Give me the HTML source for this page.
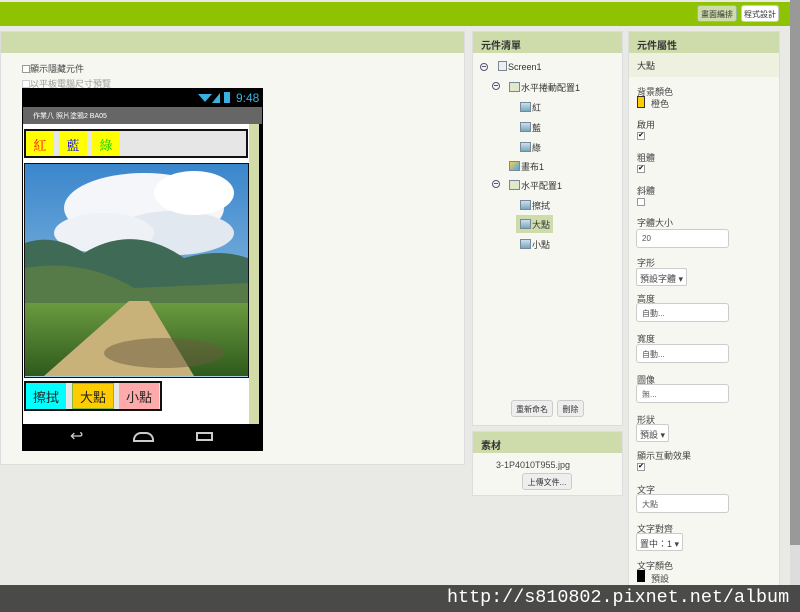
<!DOCTYPE html>
<html><head><meta charset="utf-8"><style>
*{margin:0;padding:0;box-sizing:border-box}
body{width:800px;height:612px;overflow:hidden;background:#e9e9e6;font-family:"Liberation Sans","Noto Sans CJK TC",sans-serif;font-size:9px;color:#333;position:relative}
.a{position:absolute}
.hd{background:#cddcaa;height:21px;font-size:10px;font-weight:bold;color:#333;padding:5px 8px}
.pn{background:#f7f7f2;border:1px solid #ddd}
.lbl{position:absolute;left:637px;font-size:9px;color:#444;white-space:nowrap}
.inp{position:absolute;left:636px;width:93px;height:19px;background:#fff;border:1px solid #ccc;border-radius:3px;font-size:8px;padding:4px 5px;color:#555}
.sel{position:absolute;left:636px;height:18px;background:#fff;border:1px solid #ccc;border-radius:2px;font-size:9px;padding:3px 3px;color:#444;white-space:nowrap}
.cb{position:absolute;left:637px;width:8px;height:8px;border:1px solid #999;background:#fff;font-size:7px;line-height:6px;text-align:center;color:#000}
.btn{position:absolute;background:#eee;border:1px solid #ccc;border-radius:3px;font-size:8px;text-align:center;padding-top:3px;color:#333;white-space:nowrap}
.tr{position:absolute;font-size:9px;color:#333;white-space:nowrap}
.ic{display:inline-block;width:11px;height:10px;background:linear-gradient(#cde,#7ab);border:1px solid #789;vertical-align:-1px;margin-right:1px}
.mi{position:absolute;width:8px;height:8px;border:1px solid #557;border-radius:50%}
.mi:after{content:"";position:absolute;left:1px;top:2px;width:4px;height:1px;background:#557}
</style></head><body>
<div class="a" style="left:0;top:2px;width:790px;height:24px;background:#8fc200"></div>
<div class="btn" style="left:697px;top:5px;width:40px;height:17px;background:#cddcaa;border-color:#9b9">畫面編排</div>
<div class="btn" style="left:741px;top:5px;width:38px;height:17px;background:#fff">程式設計</div>

<div class="a pn" style="left:0;top:31px;width:465px;height:434px">
<div class="hd" style="height:21px"></div></div>
<div class="a" style="left:22px;top:62px;font-size:9px;color:#444"><span class="cb" style="position:relative;left:0;display:inline-block;vertical-align:-1px"></span>顯示隱藏元件</div>
<div class="a" style="left:22px;top:77px;font-size:9px;color:#999"><span class="cb" style="position:relative;left:0;display:inline-block;vertical-align:-1px;border-color:#ccc"></span>以平板電腦尺寸預覽</div>
<div class="a" style="left:22px;top:88px;width:241px;height:363px;background:#000"></div>
<div class="a" style="left:236px;top:91px;color:#3ab0e0;font-size:12px">9:48</div>
<div class="a" style="left:198px;top:92px;width:14px;height:10px;background:#3ab0e0;clip-path:polygon(50% 100%,0 20%,100% 20%)"></div>
<div class="a" style="left:212px;top:93px;width:8px;height:10px;background:#3ab0e0;clip-path:polygon(100% 0,100% 100%,0 100%)"></div>
<div class="a" style="left:224px;top:92px;width:6px;height:11px;background:#3ab0e0"></div>
<div class="a" style="left:23px;top:107px;width:239px;height:17px;background:#666;color:#fff;font-size:7px;padding:4px 10px">作業八 照片塗鴉2 BA05</div>
<div class="a" style="left:23px;top:124px;width:226px;height:300px;background:#fff"></div>
<div class="a" style="left:249px;top:124px;width:10px;height:300px;background:#d2dca8"></div>
<div class="a" style="left:24px;top:129px;width:224px;height:29px;border:2px solid #111;background:#e6e6e6"></div>
<div class="a" style="left:26px;top:131px;width:28px;height:25px;background:#ff0;color:#f00;font-size:13px;text-align:center;padding-top:4px;font-family:'Noto Serif CJK SC',serif">紅</div>
<div class="a" style="left:59px;top:131px;width:28px;height:25px;background:#ff0;color:#00f;font-size:13px;text-align:center;padding-top:4px;font-family:'Noto Serif CJK SC',serif">藍</div>
<div class="a" style="left:92px;top:131px;width:28px;height:25px;background:#ff0;color:#0c0;font-size:13px;text-align:center;padding-top:4px;font-family:'Noto Serif CJK SC',serif">綠</div>
<svg class="a" style="left:24px;top:163px" width="225" height="215" viewBox="0 0 225 215">
<rect width="225" height="215" fill="#111"/>
<defs><linearGradient id="s" x1="0" y1="0" x2="0" y2="1"><stop offset="0" stop-color="#3a86cc"/><stop offset="1" stop-color="#a8cfe8"/></linearGradient>
<linearGradient id="f" x1="0" y1="0" x2="0" y2="1"><stop offset="0" stop-color="#6a9a40"/><stop offset="1" stop-color="#2f5a1c"/></linearGradient></defs>
<rect x="1" y="1" width="223" height="213" fill="url(#s)"/>
<ellipse cx="120" cy="45" rx="80" ry="35" fill="#f4f6fa"/>
<ellipse cx="150" cy="70" rx="60" ry="22" fill="#e2e8f0"/>
<ellipse cx="80" cy="70" rx="50" ry="20" fill="#eef2f6"/>
<ellipse cx="170" cy="30" rx="40" ry="22" fill="#fff"/>
<path d="M1 80 Q30 70 60 90 Q110 60 160 95 Q195 85 224 95 L224 140 L1 140Z" fill="#3f6a55"/>
<path d="M1 105 Q60 95 110 125 L224 120 L224 145 L1 145Z" fill="#567a48"/>
<rect x="1" y="140" width="223" height="73" fill="url(#f)"/>
<path d="M105 138 L125 138 L170 213 L20 213Z" fill="#c9b27a"/>
<ellipse cx="140" cy="190" rx="60" ry="15" fill="#6a5a40" opacity=".5"/>
</svg>
<div class="a" style="left:24px;top:381px;width:138px;height:30px;border:2px solid #111;background:#e6e6e6"></div>
<div class="a" style="left:26px;top:383px;width:40px;height:26px;background:#0ff;font-size:13px;text-align:center;padding-top:4px;color:#222">擦拭</div>
<div class="a" style="left:72px;top:383px;width:42px;height:26px;background:#fc0;border:1px solid #8b3;font-size:13px;text-align:center;padding-top:3px;color:#222">大點</div>
<div class="a" style="left:119px;top:383px;width:40px;height:26px;background:#faa;font-size:13px;text-align:center;padding-top:4px;color:#222">小點</div>
<div class="a" style="left:70px;top:426px;color:#ccc;font-size:16px">↩</div>
<div class="a" style="left:133px;top:432px;width:21px;height:10px;border:2px solid #ccc;border-radius:8px 8px 0 0"></div>
<div class="a" style="left:196px;top:432px;width:17px;height:9px;border:2px solid #ccc"></div>

<div class="a pn" style="left:472px;top:31px;width:151px;height:395px"><div class="hd">元件清單</div></div>
<div class="mi" style="left:480px;top:63px"></div>
<div class="tr" style="left:498px;top:61px"><span class="ic" style="background:#eee;width:9px"></span>Screen1</div>
<div class="mi" style="left:492px;top:82px"></div>
<div class="tr" style="left:509px;top:81px"><span class="ic" style="background:#dfe8c8"></span>水平捲動配置1</div>
<div class="tr" style="left:520px;top:101px"><span class="ic"></span>紅</div>
<div class="tr" style="left:520px;top:121px"><span class="ic"></span>藍</div>
<div class="tr" style="left:520px;top:141px"><span class="ic"></span>綠</div>
<div class="tr" style="left:509px;top:160px"><span class="ic" style="background:linear-gradient(135deg,#fc4,#4ae)"></span>畫布1</div>
<div class="mi" style="left:492px;top:180px"></div>
<div class="tr" style="left:509px;top:179px"><span class="ic" style="background:#dfe8c8"></span>水平配置1</div>
<div class="tr" style="left:520px;top:199px"><span class="ic"></span>擦拭</div>
<div class="a" style="left:516px;top:215px;width:37px;height:18px;background:#cddcaa"></div>
<div class="tr" style="left:520px;top:218px"><span class="ic"></span>大點</div>
<div class="tr" style="left:520px;top:238px"><span class="ic"></span>小點</div>
<div class="btn" style="left:511px;top:400px;width:42px;height:17px">重新命名</div>
<div class="btn" style="left:557px;top:400px;width:27px;height:17px">刪除</div>
<div class="a pn" style="left:472px;top:431px;width:151px;height:65px"><div class="hd">素材</div></div>
<div class="a" style="left:496px;top:460px;font-size:9px;color:#444">3-1P4010T955.jpg</div>
<div class="btn" style="left:522px;top:473px;width:50px;height:17px">上傳文件...</div>

<div class="a pn" style="left:628px;top:31px;width:152px;height:581px"><div class="hd">元件屬性</div>
<div style="background:#eef0e0;height:24px;padding:6px 8px;font-size:9px">大點</div></div>
<div class="lbl" style="top:85px">背景顏色</div>
<div class="a" style="left:637px;top:96px;width:8px;height:12px;background:#fc0;border:1px solid #333"></div>
<div class="lbl" style="left:651px;top:97px">橙色</div>
<div class="lbl" style="top:118px">啟用</div><div class="cb" style="top:132px">✔</div>
<div class="lbl" style="top:151px">粗體</div><div class="cb" style="top:165px">✔</div>
<div class="lbl" style="top:184px">斜體</div><div class="cb" style="top:198px"></div>
<div class="lbl" style="top:216px">字體大小</div><div class="inp" style="top:229px">20</div>
<div class="lbl" style="top:256px">字形</div><div class="sel" style="top:268px">預設字體 ▾</div>
<div class="lbl" style="top:292px">高度</div><div class="inp" style="top:303px">自動...</div>
<div class="lbl" style="top:332px">寬度</div><div class="inp" style="top:344px">自動...</div>
<div class="lbl" style="top:373px">圖像</div><div class="inp" style="top:384px">無...</div>
<div class="lbl" style="top:413px">形狀</div><div class="sel" style="top:424px">預設 ▾</div>
<div class="lbl" style="top:449px">顯示互動效果</div><div class="cb" style="top:463px">✔</div>
<div class="lbl" style="top:483px">文字</div><div class="inp" style="top:494px">大點</div>
<div class="lbl" style="top:522px">文字對齊</div><div class="sel" style="top:533px">置中：1 ▾</div>
<div class="lbl" style="top:559px">文字顏色</div>
<div class="a" style="left:637px;top:570px;width:8px;height:12px;background:#000"></div>
<div class="lbl" style="left:651px;top:572px">預設</div>

<div class="a" style="left:790px;top:0;width:10px;height:545px;background:#999"></div>
<div class="a" style="left:790px;top:545px;width:10px;height:67px;background:#ddd"></div>

<div class="a" style="left:0;top:585px;width:800px;height:27px;background:rgba(60,60,60,.92);color:#fff;font-family:'Liberation Mono',monospace;font-size:18.4px;padding:2px 0 0 447px;white-space:nowrap">http://s810802.pixnet.net/album</div>
</body></html>
